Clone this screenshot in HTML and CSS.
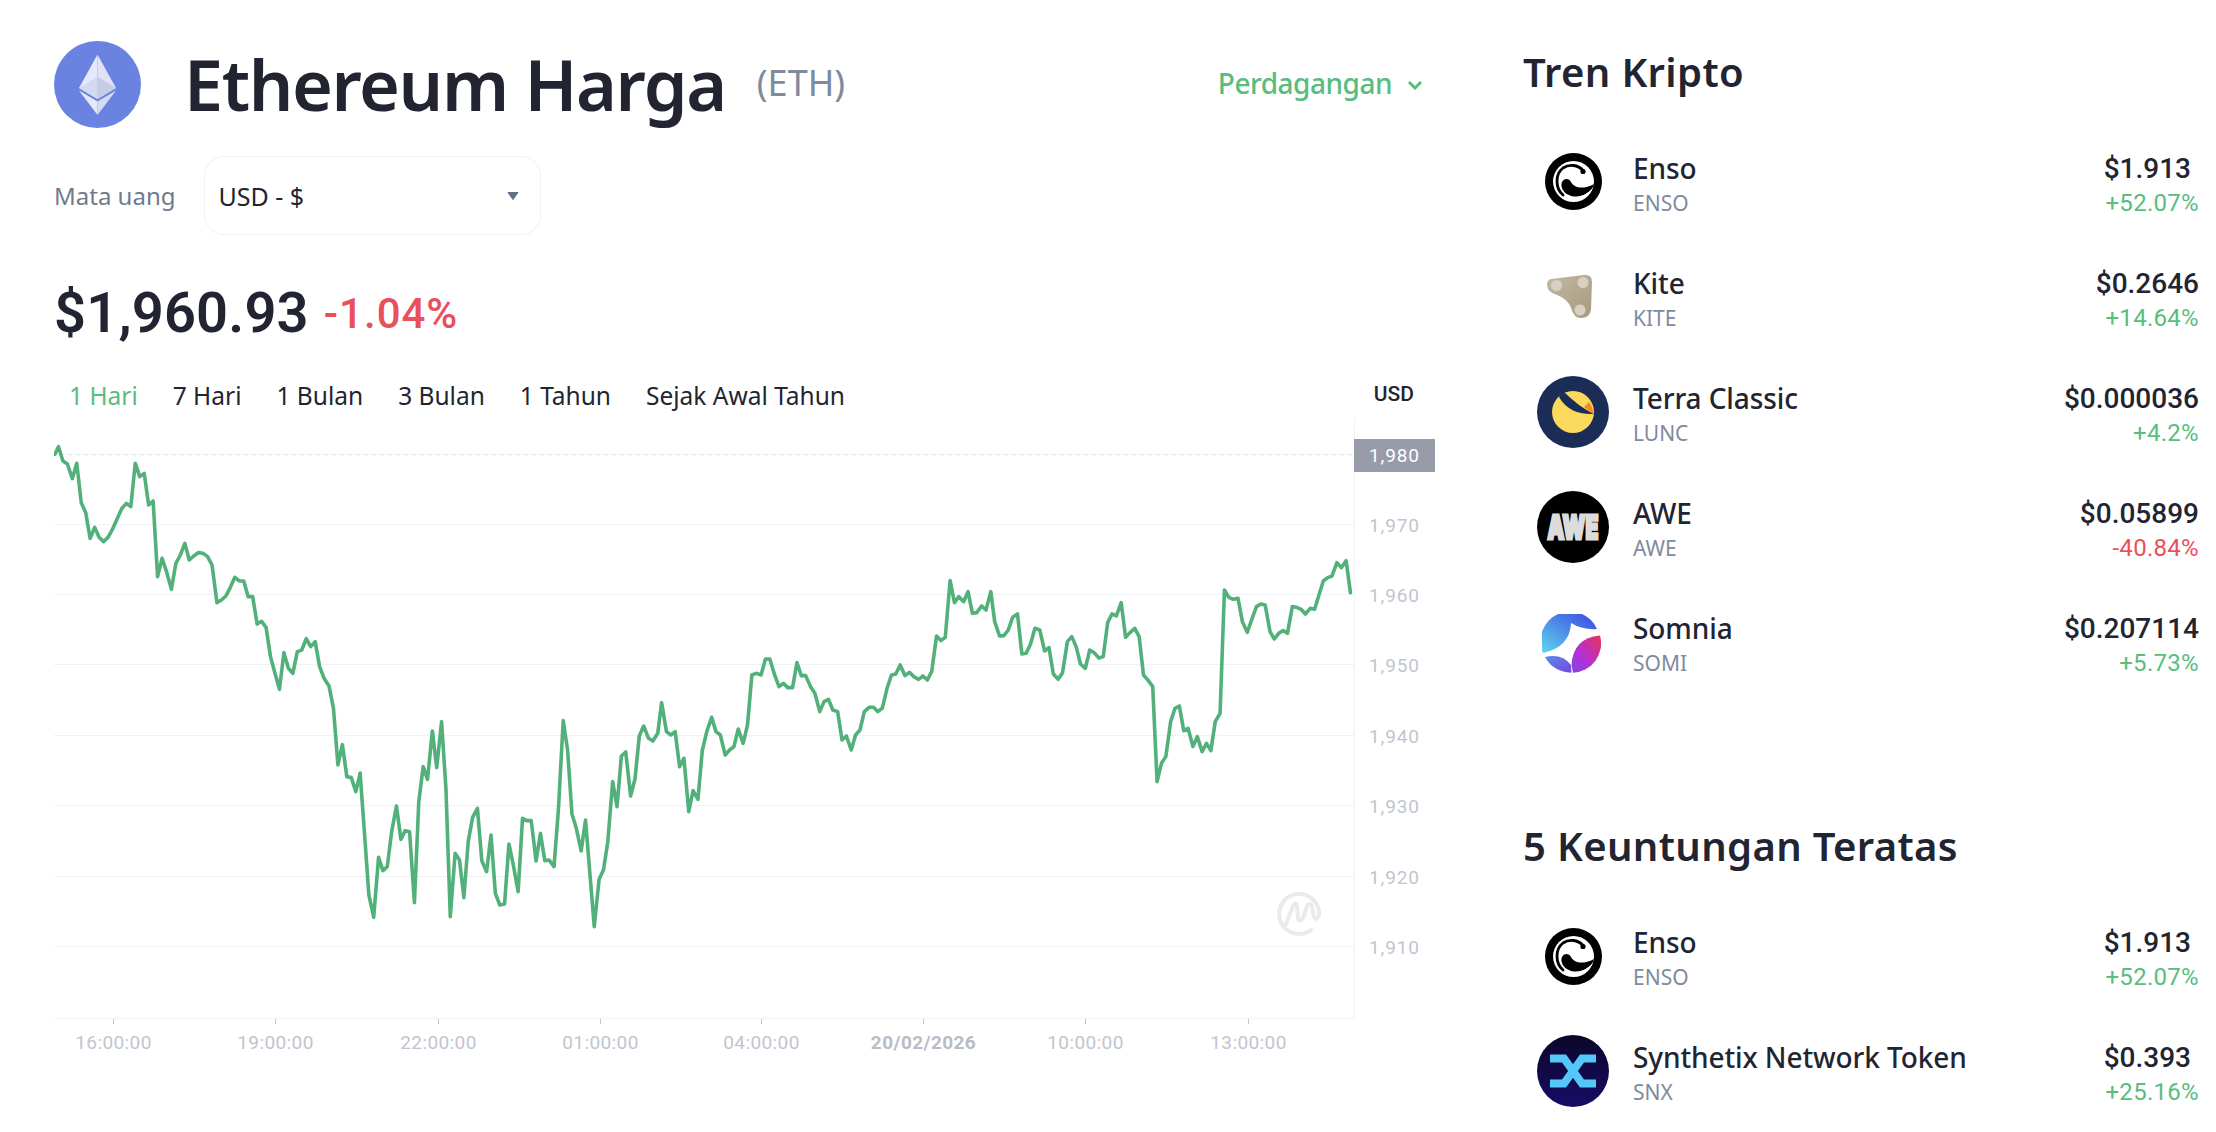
FILE: index.html
```html
<!DOCTYPE html>
<html lang="id">
<head>
<meta charset="utf-8">
<title>Ethereum Harga</title>
<link rel="stylesheet" href="styles.css">
</head>
<body>
<div class="page">
  <main class="main">
    <header class="head">
      <svg class="eth" viewBox="0 0 87 87" aria-hidden="true">
        <circle cx="43.5" cy="43.5" r="43.5" fill="#6a82e0"/>
        <path d="M43.5 13.5 25 47 43.5 58Z" fill="#e6e9f8"/>
        <path d="M43.5 13.5 62 47 43.5 58Z" fill="#dfe3f5"/>
        <path d="M43.5 35.5 25 47 43.5 58Z" fill="#d4d9ef"/>
        <path d="M43.5 35.5 62 47 43.5 58Z" fill="#c6cce5"/>
        <path d="M25 49.5 43.5 60.5V74Z" fill="#e6e9f8"/>
        <path d="M62 49.5 43.5 60.5V74Z" fill="#d6dbf1"/>
      </svg>
      <h1 class="title">Ethereum Harga</h1>
      <span class="ticker">(ETH)</span>
      <a class="trade">Perdagangan
        <svg class="chev" viewBox="0 0 16 10" aria-hidden="true"><path d="M2 2 8 8 14 2" fill="none" stroke="#58bd7d" stroke-width="3"/></svg>
      </a>
    </header>

    <div class="currency">
      <span class="cur-label">Mata uang</span>
      <div class="select">
        <span>USD - $</span>
        <svg class="caret" viewBox="0 0 12 8" aria-hidden="true"><path d="M1 .5H11L6 7.5Z" fill="#616e85" stroke="#616e85" stroke-linejoin="round"/></svg>
      </div>
    </div>

    <div class="price-row">
      <span class="price">$1,960.93</span>
      <span class="delta">-1.04%</span>
    </div>

    <nav class="tabs">
      <a class="tab on">1 Hari</a>
      <a class="tab">7 Hari</a>
      <a class="tab">1 Bulan</a>
      <a class="tab">3 Bulan</a>
      <a class="tab">1 Tahun</a>
      <a class="tab">Sejak Awal Tahun</a>
      <span class="unit">USD</span>
    </nav>

    <svg class="chart" viewBox="54 414 1390 650" width="1390" height="650" role="img" aria-label="Grafik harga Ethereum">
      <g class="grid">
        <line x1="54" x2="1354" y1="454.5" y2="454.5"/>
        <line x1="54" x2="1354" y1="524.5" y2="524.5"/>
        <line x1="54" x2="1354" y1="594.5" y2="594.5"/>
        <line x1="54" x2="1354" y1="664.5" y2="664.5"/>
        <line x1="54" x2="1354" y1="735.5" y2="735.5"/>
        <line x1="54" x2="1354" y1="805.5" y2="805.5"/>
        <line x1="54" x2="1354" y1="876.5" y2="876.5"/>
        <line x1="54" x2="1354" y1="946.5" y2="946.5"/>
        <line x1="54" x2="1354" y1="1018.5" y2="1018.5"/>
        <line x1="1354.5" x2="1354.5" y1="418" y2="1018"/>
      </g>
      <line class="dots" x1="54" x2="1354" y1="455.5" y2="455.5"/>
      <g class="ticks">
        <line x1="113.5" x2="113.5" y1="1019" y2="1024"/>
        <line x1="275.5" x2="275.5" y1="1019" y2="1024"/>
        <line x1="438.5" x2="438.5" y1="1019" y2="1024"/>
        <line x1="600.5" x2="600.5" y1="1019" y2="1024"/>
        <line x1="761.5" x2="761.5" y1="1019" y2="1024"/>
        <line x1="923.5" x2="923.5" y1="1019" y2="1024"/>
        <line x1="1085.5" x2="1085.5" y1="1019" y2="1024"/>
        <line x1="1248.5" x2="1248.5" y1="1019" y2="1024"/>
      </g>

      <path class="mark" d="M1319 916A20 20 0 1 0 1311 930"/>
      <path class="mark" d="M1286 924 1293 906Q1296 901 1297 906L1298 918Q1300 923 1303 918L1307 906Q1310 901 1312 907L1314 917Q1316 921 1319 916"/>

      <g transform="translate(0 420) scale(.4464 .3333)">
        <polyline class="line" points="123,103 131,80 141,123 151,132 162,176 172,130 182,248 192,278 202,355 212,322 222,352 232,365 243,350 253,325 263,295 273,265 283,250 293,260 303,130 313,170 323,160 333,255 343,243 353,470 363,415 373,455 384,508 394,430 404,405 414,370 424,420 434,408 444,398 455,400 465,410 475,435 486,548 496,540 506,528 516,502 526,472 536,483 546,483 556,530 566,530 576,612 586,604 596,622 606,710 616,760 626,808 636,698 646,745 656,760 666,695 676,690 686,656 696,680 706,665 716,740 726,775 737,798 747,865 757,1035 767,974 777,1070 787,1073 797,1115 807,1060"/>
      </g>
      <g transform="translate(0 720) scale(.4847 .3333)">
        <polyline class="line" points="743,160 752,340 761,525 771,592 781,412 790,452 799,440 808,335 818,258 827,358 836,332 845,335 855,548 864,245 873,140 882,178 892,33 901,143 911,5 920,205 929,590 939,400 948,420 957,533 966,365 975,292 985,265 994,422 1004,455 1013,345 1022,520 1031,555 1041,552 1050,372 1059,435 1069,515 1078,295 1087,302 1096,302 1106,423 1115,340 1124,422 1133,420 1143,440 1152,270 1162,2 1171,90 1180,282 1189,325 1199,393 1208,300 1217,460 1226,620 1236,478 1245,450 1254,365 1264,185 1273,260 1282,108 1291,96 1301,228 1310,178 1319,48 1328,18 1338,55 1347,63 1357,40 1365,-52 1375,35 1384,45 1393,35 1402,140 1411,115 1421,275 1430,212 1440,238 1449,90"/>
      </g>
      <g transform="translate(700 420) scale(.4847 .3333)">
        <polyline class="line" points="5,990 14,935 24,892 33,935 42,945 52,1005 61,990 70,980 79,927 89,970 98,915 107,765 116,760 126,765 135,717 144,717 154,765 163,800 172,790 181,803 191,803 200,728 209,767 218,767 228,800 237,820 247,875 256,845 265,838 274,870 284,875 293,960 302,948 312,990 321,945 330,930 339,875 349,862 358,862 367,875 376,865 386,805 395,765 404,762 413,735 423,767 432,757 441,770 451,778 460,768 469,780 478,755 488,648 497,662 506,652 516,482 525,548 534,530 544,545 553,515 562,580 571,578 581,558 590,570 600,515 608,605 618,648 627,647 636,630 645,592 655,582 664,702 673,700 682,672 691,625 701,630 711,693 720,683 729,762 739,778 748,758 758,665 767,650 776,680 785,732 795,745 804,690 813,698 823,714 832,710 841,608 850,582 859,588 869,548 878,652 887,638 897,625 906,650 915,765 925,782 934,800 943,1085 952,1030 961,1010 971,905 980,865 989,858 998,932 1007,925 1017,980 1026,950 1036,995 1045,970 1054,992 1063,905 1073,880 1082,510 1091,532 1100,538 1110,535 1119,605 1129,637 1138,600 1148,560 1157,552 1166,555 1176,635 1185,657 1194,640 1203,632 1212,640 1222,560 1231,562 1240,568 1249,582 1259,565 1268,568 1277,525 1286,483 1295,473 1304,468 1314,428 1323,443 1333,422 1342,518"/>
      </g>

      <rect class="tag" x="1354" y="439" width="81" height="33"/>
      <text class="ylab tagtext" x="1369" y="461.500">1,980</text>
      <text class="ylab" x="1369" y="532">1,970</text>
      <text class="ylab" x="1369" y="602">1,960</text>
      <text class="ylab" x="1369" y="672">1,950</text>
      <text class="ylab" x="1369" y="743">1,940</text>
      <text class="ylab" x="1369" y="813">1,930</text>
      <text class="ylab" x="1369" y="884">1,920</text>
      <text class="ylab" x="1369" y="954">1,910</text>

      <text class="xlab" x="113.5" y="1049">16:00:00</text>
      <text class="xlab" x="275.5" y="1049">19:00:00</text>
      <text class="xlab" x="438.5" y="1049">22:00:00</text>
      <text class="xlab" x="600.5" y="1049">01:00:00</text>
      <text class="xlab" x="761.5" y="1049">04:00:00</text>
      <text class="xlab strong" x="923.5" y="1049">20/02/2026</text>
      <text class="xlab" x="1085.5" y="1049">10:00:00</text>
      <text class="xlab" x="1248.5" y="1049">13:00:00</text>
    </svg>
  </main>

  <aside class="side">
    <h2 class="sec-title">Tren Kripto</h2>
    <ul class="list">
      <li class="row">
        <span class="icon"><svg class="i57" viewBox="0 0 57 57" aria-hidden="true"><use href="#enso"/></svg></span>
        <div class="who"><span class="name">Enso</span><span class="sym">ENSO</span></div>
        <div class="nums"><span class="val gap">$1.913</span><span class="pct up">+52.07%</span></div>
      </li>
      <li class="row">
        <span class="icon">
          <svg class="i45 shift-l" viewBox="0 0 45 45" aria-hidden="true">
            <defs><linearGradient id="kg" x1="0" y1="0" x2="1" y2="1"><stop offset="0" stop-color="#c3b8a3"/><stop offset="1" stop-color="#a79a80"/></linearGradient></defs>
            <path d="M4 5 37 1Q45 0 45 8L44 35Q43 44 34 44 27 44 24 34 21 25 10 21 0 18 0 11 0 6 4 5Z" fill="url(#kg)"/>
            <circle cx="9.500" cy="11.500" r="5.500" fill="#d8d1c3"/><circle cx="36" cy="8.500" r="5.500" fill="#d8d1c3"/><circle cx="33" cy="36" r="5.500" fill="#d8d1c3"/>
          </svg>
        </span>
        <div class="who"><span class="name">Kite</span><span class="sym">KITE</span></div>
        <div class="nums"><span class="val">$0.2646</span><span class="pct up">+14.64%</span></div>
      </li>
      <li class="row">
        <span class="icon">
          <svg class="i72" viewBox="0 0 72 72" aria-hidden="true">
            <circle cx="36" cy="36" r="36" fill="#1b2d57"/>
            <circle cx="36" cy="36" r="21" fill="#fbd95c"/>
            <path d="M22 21Q32 39 57 38 42 31 26 15Z" fill="#1b2d57"/>
            <path d="M56.500 38Q51 35 47 31L52 26Q56 31 56.500 38Z" fill="#f28b2a"/>
          </svg>
        </span>
        <div class="who"><span class="name">Terra Classic</span><span class="sym">LUNC</span></div>
        <div class="nums"><span class="val">$0.000036</span><span class="pct up">+4.2%</span></div>
      </li>
      <li class="row">
        <span class="icon">
          <svg class="i72" viewBox="0 0 72 72" aria-hidden="true">
            <circle cx="36" cy="36" r="36" fill="#000"/>
            <text class="awe" transform="translate(36 48) scale(.64 1)" text-anchor="middle">AWE</text>
          </svg>
        </span>
        <div class="who"><span class="name">AWE</span><span class="sym">AWE</span></div>
        <div class="nums"><span class="val">$0.05899</span><span class="pct down">-40.84%</span></div>
      </li>
      <li class="row">
        <span class="icon">
          <svg class="i59 shift-s" viewBox="0 0 59 59" aria-hidden="true">
            <defs>
              <linearGradient id="s1" x1="0" y1="1" x2="1" y2="0"><stop offset="0" stop-color="#5fd8ee"/><stop offset=".55" stop-color="#4b82e6"/><stop offset="1" stop-color="#3a45e4"/></linearGradient>
              <linearGradient id="s2" x1="1" y1="0" x2="0" y2="1"><stop offset="0" stop-color="#e8325c"/><stop offset=".6" stop-color="#b32fd8"/><stop offset="1" stop-color="#7e48e0"/></linearGradient>
              <linearGradient id="s3" x1="0" y1="0" x2="1" y2="1"><stop offset="0" stop-color="#5a8aea"/><stop offset="1" stop-color="#7a45dd"/></linearGradient>
            </defs>
            <path d="M1 39A29.300 29.300 0 0 1 55 15Q40 16 29 9 28 33 1 39Z" fill="url(#s1)"/>
            <path d="M58 21.500Q31 24 29.500 51L31 58.700A29.300 29.300 0 0 0 58 21.500Z" fill="url(#s2)"/>
            <path d="M3 43Q20 39 29 51L29.500 58.700A29.300 29.300 0 0 1 3 43Z" fill="url(#s3)"/>
          </svg>
        </span>
        <div class="who"><span class="name">Somnia</span><span class="sym">SOMI</span></div>
        <div class="nums"><span class="val">$0.207114</span><span class="pct up">+5.73%</span></div>
      </li>
    </ul>

    <h2 class="sec-title second">5 Keuntungan Teratas</h2>
    <ul class="list">
      <li class="row">
        <span class="icon">
          <svg class="i57" viewBox="0 0 57 57" aria-hidden="true">
            <g id="enso">
              <circle cx="28.500" cy="28.500" r="28.500" fill="#000"/>
              <circle cx="28.500" cy="28.500" r="20.500" fill="#fff"/>
              <path d="M38 17.500C33 11.500 24 11 18 15 10 21 10 35 18 42" fill="none" stroke="#000" stroke-width="2.800" stroke-linecap="round"/>
              <circle cx="38" cy="18.500" r="2.600" fill="#000"/>
              <path d="M17 29C19 25 24 25 26 29 29 35 38 37 49 31 46 42 32 46 24 42 18 40 15 33 17 29Z" fill="#000"/>
              <path d="M20 43Q33 49 47 37" fill="none" stroke="#fff" stroke-width="1"/>
            </g>
          </svg>
        </span>
        <div class="who"><span class="name">Enso</span><span class="sym">ENSO</span></div>
        <div class="nums"><span class="val gap">$1.913</span><span class="pct up">+52.07%</span></div>
      </li>
      <li class="row">
        <span class="icon">
          <svg class="i72" viewBox="0 0 72 72" aria-hidden="true">
            <defs><linearGradient id="sn" x1="0" y1="0" x2="0" y2="1"><stop offset="0" stop-color="#0a0628"/><stop offset="1" stop-color="#170c66"/></linearGradient></defs>
            <circle cx="36" cy="36" r="36" fill="url(#sn)"/>
            <path d="M13 23.500H27L45 48.500H59M13 48.500H27L45 23.500H59" fill="none" stroke="#53c8f8" stroke-width="8"/>
          </svg>
        </span>
        <div class="who"><span class="name">Synthetix Network Token</span><span class="sym">SNX</span></div>
        <div class="nums"><span class="val gap">$0.393</span><span class="pct up">+25.16%</span></div>
      </li>
    </ul>
  </aside>
</div>
</body>
</html>
```
FILE: styles.css
```css
* { box-sizing: border-box; }
html, body { margin: 0; padding: 0; background: #fff; }
body { font-family: "Noto Sans", "Liberation Sans", sans-serif; color: #222531; overflow: hidden; height: 1132px; }
a { color: inherit; text-decoration: none; }
ul { list-style: none; margin: 0; padding: 0; }

.page { display: flex; width: 2216px; }
.main { width: 1523px; padding: 41px 0 0 54px; flex: none; }
.side { flex: 1; padding: 42px 17px 0 0; }

.head { display: flex; align-items: center; width: 1369px; height: 87px; }
.eth { width: 87px; height: 87px; flex: none; }
.title { margin: 0 0 0 43px; font-size: 70px; font-weight: 600; line-height: 87px; letter-spacing: -1.4px; }
.ticker { margin-left: 31px; font-size: 36px; color: #7f8a9e; position: relative; top: -2px; }
.trade { margin-left: auto; display: flex; align-items: center; gap: 15px; color: #58bd7d; font-size: 28px; font-weight: 500; letter-spacing: -.5px; position: relative; top: -2px; }
.chev { width: 16px; height: 10px; margin-top: 4px; }

.currency { display: flex; align-items: center; margin-top: 28px; height: 79px; }
.cur-label { width: 149.500px; font-size: 24px; color: #6f7a8e; }
.select { width: 337px; height: 79px; border: 1px solid #eff2f5; border-radius: 20px; display: flex; align-items: center; justify-content: space-between; padding: 0 21px 0 14px; font-size: 25px; }
.caret { width: 12px; height: 8px; }

.price-row { display: flex; align-items: center; gap: 15px; margin-top: 50px; height: 56px; font-family: Roboto, "Liberation Sans", sans-serif; }
.price { font-size: 56px; font-weight: 600; letter-spacing: .2px; }
.delta { font-size: 42px; font-weight: 500; letter-spacing: 1px; color: #e9505c; }

.tabs { display: flex; align-items: center; gap: 35px; height: 36px; margin: 36px 0 1px; width: 1360px; padding-left: 15px; font-size: 24.5px; }
.tab.on { color: #58bd7d; }
.unit { margin-left: auto; font-family: Roboto, "Liberation Sans", sans-serif; font-size: 21px; font-weight: 500; position: relative; top: -1px; }

.chart { display: block; }
.grid line { stroke: #eff2f5; stroke-width: 1; }
.dots { stroke: #d6d9de; stroke-width: 1; stroke-dasharray: 1 7; }
.ticks line { stroke: #c3c6d0; stroke-width: 1; }
.line { fill: none; stroke: #52b17a; stroke-width: 3.6; stroke-linejoin: round; stroke-linecap: round; vector-effect: non-scaling-stroke; }
.mark { fill: none; stroke: #e9eaec; stroke-width: 4; stroke-linecap: round; stroke-linejoin: round; }
.tag { fill: #979ca8; }
.ylab { font-family: Roboto, "Liberation Sans", sans-serif; font-size: 19px; letter-spacing: .9px; fill: #c1c5cf; }
.ylab.tagtext { fill: #fff; }
.xlab { font-family: Roboto, "Liberation Sans", sans-serif; font-size: 19px; fill: #c1c5cf; text-anchor: middle; letter-spacing: .4px; }
.xlab.strong { font-weight: 700; fill: #b9bcc7; }

.sec-title { margin: 0 0 22px; font-size: 40px; font-weight: 600; line-height: 60px; letter-spacing: .35px; }
.sec-title.second { margin: 116.500px 0 23px; }

.row { display: flex; align-items: center; height: 115px; padding-left: 14px; }
.icon { width: 72px; height: 72px; flex: none; display: flex; align-items: center; justify-content: center; margin-right: 24px; }
.i57 { width: 57px; height: 57px; }
.i45 { width: 45px; height: 45px; }
.i72 { width: 72px; height: 72px; }
.i59 { width: 59px; height: 59px; }
.shift-l { margin-right: 8px; }
.shift-s { margin: 4px 3px 0 0; }
.awe { font-family: Inter, "Liberation Sans", sans-serif; font-size: 33px; font-weight: 900; fill: #dcdcdc; stroke: #dcdcdc; stroke-width: 3px; }
.who, .nums { display: flex; flex-direction: column; padding-top: 8px; }
.name { font-size: 28px; font-weight: 500; line-height: 35px; letter-spacing: -.1px; }
.sym { font-size: 21px; line-height: 35px; color: #7f8a9e; }
.nums { margin-left: auto; align-items: flex-end; font-family: Roboto, "Liberation Sans", sans-serif; }
.val { font-size: 28px; font-weight: 500; line-height: 35px; }
.val.gap { margin-right: 8px; }
.pct { font-size: 24px; line-height: 35px; letter-spacing: .3px; }
.up { color: #58bd7d; }
.down { color: #e9505c; }
```
